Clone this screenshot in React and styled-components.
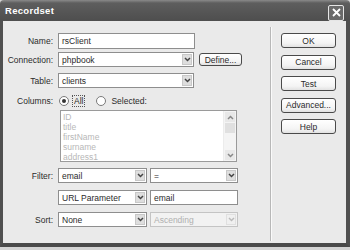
import styled, { createGlobalStyle } from "styled-components";

const GlobalStyle = createGlobalStyle`
  body {
    margin: 0;
    background: #d4d4d4;
    font-family: "Liberation Sans", Arial, sans-serif;
  }
`;

const Window = styled.div`
  width: 350px;
  height: 247px;
  display: flex;
  flex-direction: column;
  box-sizing: border-box;
`;

const TitleBar = styled.div`
  height: 21px;
  flex-shrink: 0;
  display: flex;
  align-items: center;
  justify-content: space-between;
  padding: 0 6px 0 5px;
  background: linear-gradient(#8a8a8a 0px, #5e5e5e 3px, #555 60%, #4e4e4e);
  border-top-left-radius: 4px;
  border-top-right-radius: 4px;
`;

const Title = styled.span`
  color: #fff;
  font-size: 9.5px;
  font-weight: bold;
  letter-spacing: 0.3px;
`;

const CloseButton = styled.div`
  width: 14px;
  height: 14px;
  margin-top: 4px;
  border: 1px solid #e6e6e6;
  border-radius: 2px;
  background: #6a6a6a;
  display: flex;
  align-items: center;
  justify-content: center;
`;

const Frame = styled.div`
  flex: 1;
  display: flex;
  background: #eaeaea;
  border-left: 3px solid #505050;
  border-right: 4px solid #505050;
  border-bottom: 4px solid #4a4a4a;
`;

const LeftPanel = styled.div`
  width: 267px;
  padding-top: 12px;
  display: flex;
  flex-direction: column;
`;

const Row = styled.div`
  display: flex;
  align-items: center;
  height: ${(p) => p.$h || 15}px;
  margin-top: ${(p) => p.$mt || 0}px;
`;

const Label = styled.div`
  width: 50px;
  margin-right: 5px;
  text-align: right;
  font-size: 8.5px;
  color: #2a2a2a;
  white-space: nowrap;
`;

const TextInput = styled.div`
  width: ${(p) => p.$w}px;
  height: 100%;
  box-sizing: border-box;
  margin-left: ${(p) => p.$ml || 0}px;
  border: 1px solid #8e8e8e;
  background: #fff;
  font-size: 8.5px;
  color: #2a2a2a;
  display: flex;
  align-items: center;
  padding-left: 3px;
`;

const Select = styled.div`
  width: ${(p) => p.$w}px;
  height: 100%;
  box-sizing: border-box;
  margin-left: ${(p) => p.$ml || 0}px;
  border: 1px solid ${(p) => (p.$disabled ? "#c4c4c4" : "#8e8e8e")};
  background: ${(p) => (p.$disabled ? "#f2f2f2" : "#fff")};
  display: flex;
  align-items: center;
  justify-content: space-between;
  padding: 1px 1px 1px 3px;
`;

const SelectText = styled.span`
  font-size: 8.5px;
  color: ${(p) => (p.$disabled ? "#b0b0b0" : "#2a2a2a")};
`;

const ArrowBox = styled.div`
  width: 10px;
  height: 100%;
  box-sizing: border-box;
  background: ${(p) => (p.$disabled ? "#f0f0f0" : "#dedede")};
  border: 1px solid ${(p) => (p.$disabled ? "#e0e0e0" : "#c8c8c8")};
  display: flex;
  align-items: center;
  justify-content: center;
`;

const Button = styled.div`
  width: ${(p) => p.$w || 55}px;
  height: ${(p) => p.$h || 15}px;
  box-sizing: border-box;
  margin-left: ${(p) => p.$ml || 0}px;
  border: 1px solid #4a4a4a;
  border-radius: 3px;
  background: linear-gradient(#ffffff, #f4f4f4 70%, #e2e2e2);
  font-size: 8.5px;
  color: #2a2a2a;
  display: flex;
  align-items: center;
  justify-content: center;
  white-space: nowrap;
`;

const Radio = styled.div`
  width: 8px;
  height: 8px;
  margin-left: ${(p) => p.$ml || 0}px;
  border: 1px solid #7a7a7a;
  border-radius: 50%;
  background: #fff;
  display: flex;
  align-items: center;
  justify-content: center;
  &::after {
    content: "";
    width: 4px;
    height: 4px;
    border-radius: 50%;
    background: ${(p) => (p.$checked ? "#333" : "transparent")};
  }
`;

const RadioText = styled.span`
  font-size: 8.5px;
  color: #2a2a2a;
  margin-left: ${(p) => p.$ml || 3}px;
  padding: 0 1px;
  border: 1px ${(p) => (p.$focus ? "dotted #555" : "solid transparent")};
`;

const ListBox = styled.div`
  width: 177px;
  height: 100%;
  margin-left: 2px;
  box-sizing: border-box;
  border: 1px solid #9a9a9a;
  background: #fff;
  display: flex;
`;

const ListItems = styled.div`
  flex: 1;
  padding: 1px 0 0 2px;
  font-size: 8.5px;
  line-height: 10px;
  color: #b8b8b8;
`;

const ScrollBar = styled.div`
  width: 12px;
  display: flex;
  flex-direction: column;
  background: #f4f4f4;
  border-left: 1px solid #ececec;
`;

const ScrollArrow = styled.div`
  height: 10px;
  margin: 1px;
  background: #e8e8e8;
  display: flex;
  align-items: center;
  justify-content: center;
`;

const ScrollThumb = styled.div`
  height: 10px;
  margin: 0 1px;
  background: #e0e0e0;
`;

const ScrollTrack = styled.div`
  flex: 1;
`;

const RightPanel = styled.div`
  flex: 1;
  margin: 6px 0 2px 0;
  border-left: 1px solid #b8b8b8;
  box-shadow: inset 1px 0 0 #fafafa;
  padding: 6px 0 0 10px;
  display: flex;
  flex-direction: column;
  gap: 6.5px;
`;

const Chevron = ({ up, color = "#444" }) => (
  <svg width="7" height="5" viewBox="0 0 7 5">
    <polyline
      points={up ? "1,4 3.5,1.5 6,4" : "1,1 3.5,3.5 6,1"}
      fill="none"
      stroke={color}
      strokeWidth="1.5"
    />
  </svg>
);

function Dropdown({ w, ml, text, disabled }) {
  return (
    <Select $w={w} $ml={ml} $disabled={disabled}>
      <SelectText $disabled={disabled}>{text}</SelectText>
      <ArrowBox $disabled={disabled}>
        <Chevron color={disabled ? "#bbb" : "#444"} />
      </ArrowBox>
    </Select>
  );
}

export default function App() {
  const columns = ["ID", "title", "firstName", "surname", "address1"];
  return (
    <>
      <GlobalStyle />
      <Window>
        <TitleBar>
          <Title>Recordset</Title>
          <CloseButton>
            <svg width="9" height="9" viewBox="0 0 9 9">
              <path d="M1 1L8 8M8 1L1 8" stroke="#fff" strokeWidth="1.8" />
            </svg>
          </CloseButton>
        </TitleBar>
        <Frame>
          <LeftPanel>
            <Row $h={16}>
              <Label>Name:</Label>
              <TextInput $w={137}>rsClient</TextInput>
            </Row>
            <Row $mt={3}>
              <Label>Connection:</Label>
              <Dropdown w={136} text="phpbook" />
              <Button $w={43} $h={13} $ml={5}>Define...</Button>
            </Row>
            <Row $mt={6}>
              <Label>Table:</Label>
              <Dropdown w={136} text="clients" />
            </Row>
            <Row $mt={7} $h={12}>
              <Label>Columns:</Label>
              <Radio $checked $ml={1} />
              <RadioText $focus>All</RadioText>
              <Radio $ml={11} />
              <RadioText $ml={3}>Selected:</RadioText>
            </Row>
            <Row $mt={3} $h={52}>
              <Label />
              <ListBox>
                <ListItems>
                  {columns.map((c) => (
                    <div key={c}>{c}</div>
                  ))}
                </ListItems>
                <ScrollBar>
                  <ScrollArrow>
                    <Chevron up color="#888" />
                  </ScrollArrow>
                  <ScrollThumb />
                  <ScrollTrack />
                  <ScrollArrow>
                    <Chevron color="#888" />
                  </ScrollArrow>
                </ScrollBar>
              </ListBox>
            </Row>
            <Row $mt={6}>
              <Label>Filter:</Label>
              <Dropdown w={89} text="email" />
              <Dropdown w={88} ml={3} text="=" />
            </Row>
            <Row $mt={7}>
              <Label />
              <Dropdown w={89} text="URL Parameter" />
              <TextInput $w={88} $ml={3}>email</TextInput>
            </Row>
            <Row $mt={7}>
              <Label>Sort:</Label>
              <Dropdown w={89} text="None" />
              <Dropdown w={88} ml={3} text="Ascending" disabled />
            </Row>
          </LeftPanel>
          <RightPanel>
            <Button>OK</Button>
            <Button>Cancel</Button>
            <Button>Test</Button>
            <Button>Advanced...</Button>
            <Button>Help</Button>
          </RightPanel>
        </Frame>
      </Window>
    </>
  );
}
